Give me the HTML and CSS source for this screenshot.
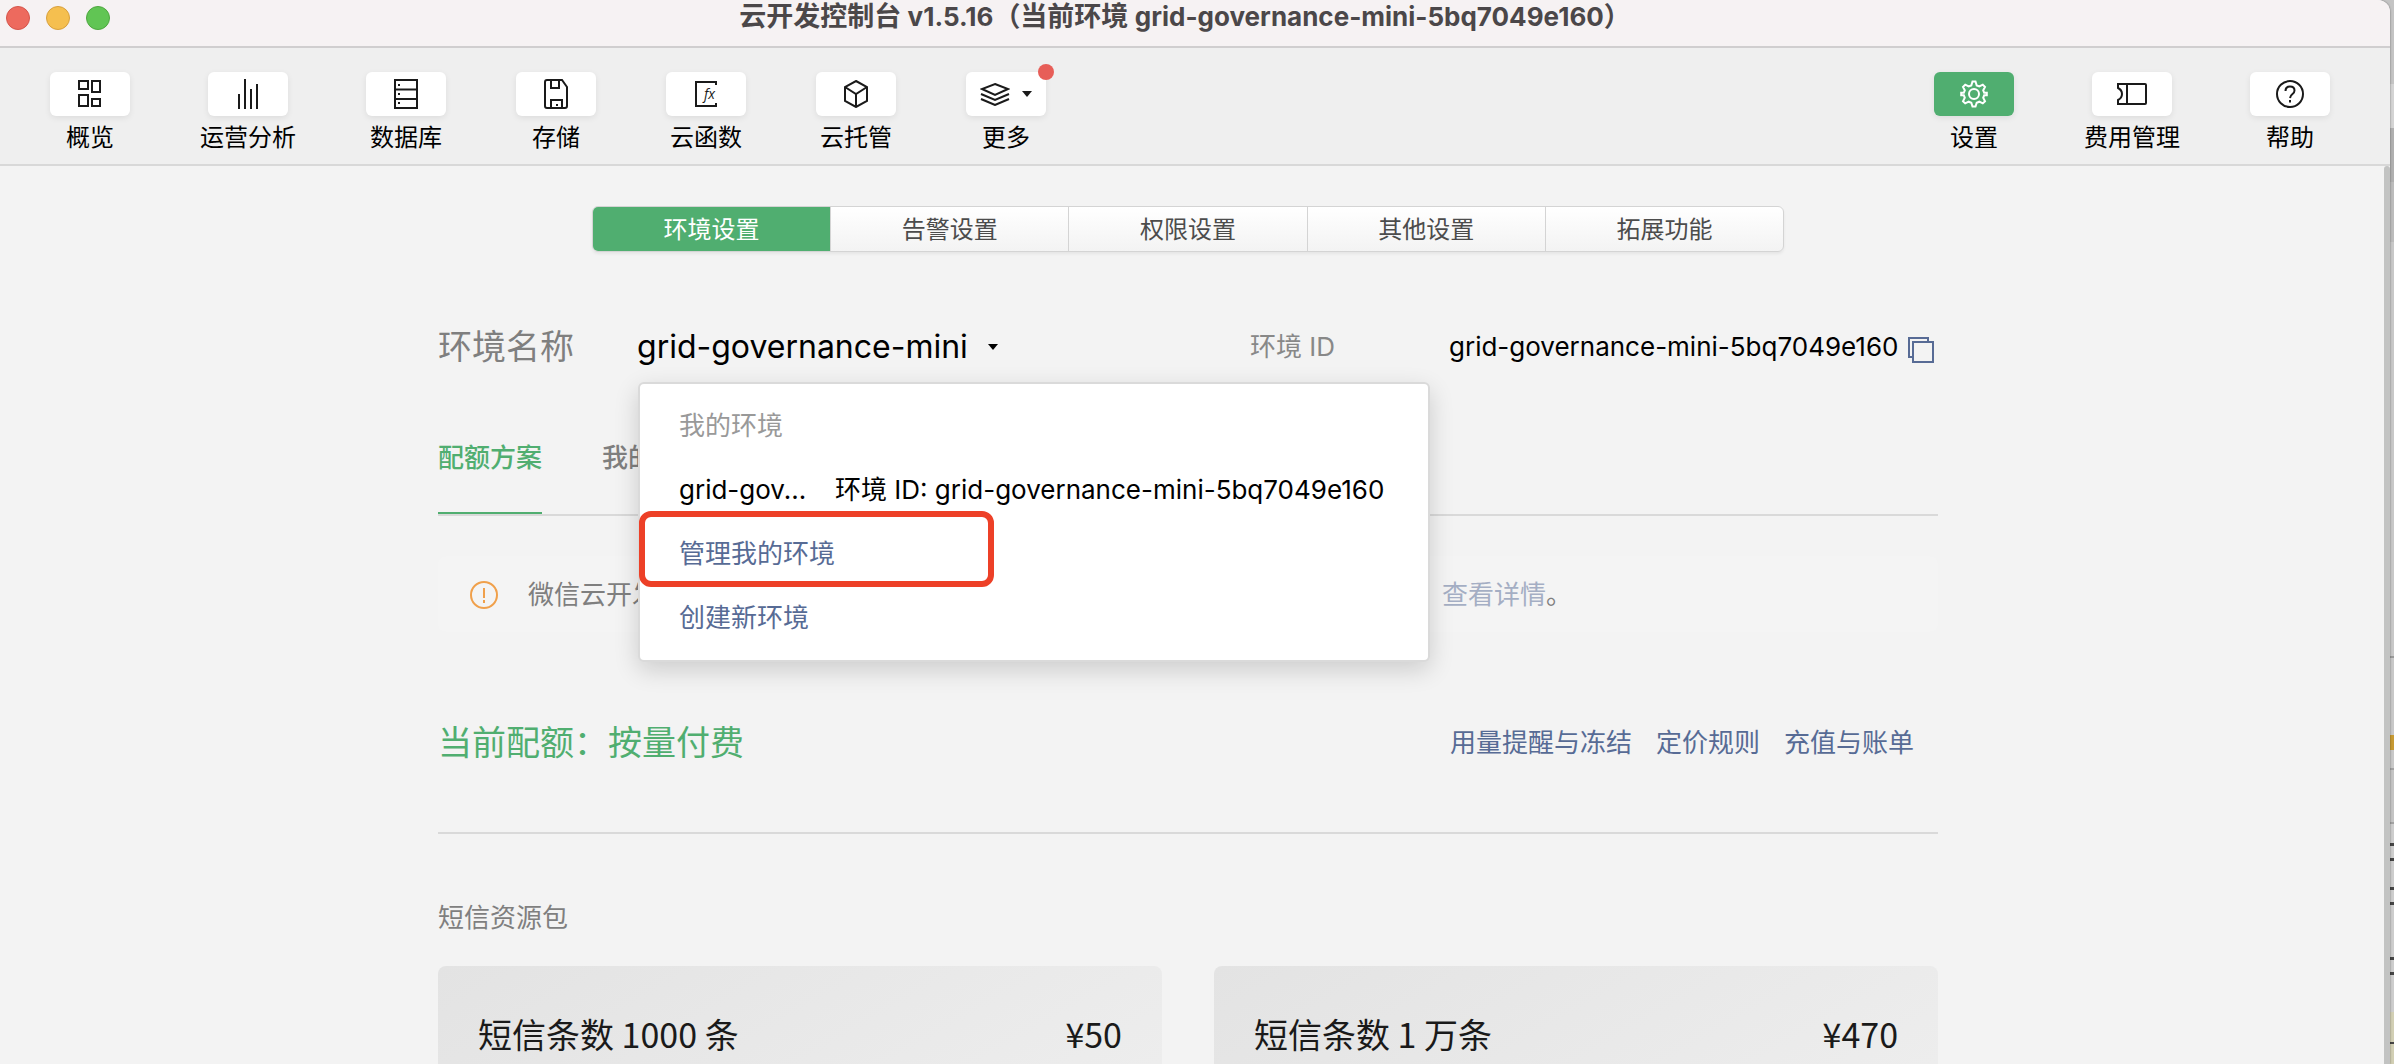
FILE: index.html
```html
<!DOCTYPE html>
<html lang="zh-CN">
<head>
<meta charset="utf-8">
<meta name="viewport" content="width=device-width, initial-scale=1">
<title>云开发控制台</title>
<link rel="stylesheet" href="styles.css">
</head>
<body>
<div class="window">
  <header class="titlebar">
    <div class="lights">
      <button class="light light-close" aria-label="关闭"></button>
      <button class="light light-min" aria-label="最小化"></button>
      <button class="light light-max" aria-label="最大化"></button>
    </div>
    <h1 class="title">云开发控制台 <span class="latin">v1.5.16</span>（当前环境 <span class="latin">grid-governance-mini-5bq7049e160</span>）</h1>
  </header>

  <nav class="toolbar" aria-label="主导航">
    <div class="tools">
      <button class="tool"><span class="tool-face">
        <svg width="24" height="30" viewBox="0 0 24 30"><path d="M1 2h9v8H1zM14 2h8v11h-8zM1 16h9v11H1zM14 20h8v7h-8z"/></svg>
      </span><span class="tool-label">概览</span></button>
      <button class="tool"><span class="tool-face">
        <svg width="22" height="30" viewBox="0 0 22 30"><path d="M2 15v15M8 0v30M14 10v20M20 5v25"/></svg>
      </span><span class="tool-label">运营分析</span></button>
      <button class="tool"><span class="tool-face">
        <svg width="24" height="30" viewBox="0 0 24 30"><path d="M1 1h22v28H1zM1 10.500h22M1 20h22"/><path d="M4 6h2M4 15h2M4 24h2"/></svg>
      </span><span class="tool-label">数据库</span></button>
      <button class="tool"><span class="tool-face">
        <svg width="24" height="30" viewBox="0 0 24 30"><path d="M1 3q0-2 2-2h15l5 7v19q0 2-2 2H3q-2 0-2-2zM7 1v8h8V1M7 29v-8h11v8M13 25v2"/></svg>
      </span><span class="tool-label">存储</span></button>
      <button class="tool"><span class="tool-face">
        <svg width="24" height="26" viewBox="0 0 24 26"><path d="M22 4V1H2v24h20v-3"/><text class="fx" x="10" y="18">fx</text></svg>
      </span><span class="tool-label">云函数</span></button>
      <button class="tool"><span class="tool-face">
        <svg width="26" height="28" viewBox="0 0 26 28"><path d="M13 1l11 6v14l-11 6L2 21V7zM2 7l11 7 11-7M13 14v13"/></svg>
      </span><span class="tool-label">云托管</span></button>
      <button class="tool tool-more"><span class="tool-face">
        <svg width="30" height="24" viewBox="0 0 30 24"><path d="M15 2l13 5-13 6L2 7zM1 12l14 6 14-6M1 17l14 6 14-6"/></svg>
        <svg class="solid" width="10" height="6" viewBox="0 0 10 6"><path d="M0 0h10L5 6z"/></svg>
        <span class="badge"></span>
      </span><span class="tool-label">更多</span></button>
    </div>
    <div class="tools">
      <button class="tool tool-active"><span class="tool-face">
        <svg width="28" height="28" viewBox="-14 -14 28 28"><circle r="5"/><path d="M-1.500-12.500h3l1.200 4 2.600 1 3.500-1.800 2.200 2.200L9.200-3.700l1 2.500 2.600 0v2.400l-2.600 0-1 2.600L11 7.300 8.800 9.400 5.300 7.700l-2.600 1-1.200 3.900h-3l-1.200-3.900-2.600-1-3.500 1.700L-11 7.300l1.800-3.500-1-2.600-2.600 0v-2.400l2.600 0 1-2.500L-11-7.100l2.200-2.200 3.500 1.800 2.600-1z"/></svg>
      </span><span class="tool-label">设置</span></button>
      <button class="tool"><span class="tool-face">
        <svg width="30" height="22" viewBox="0 0 30 22"><path d="M1 1h27q1 0 1 1v18q0 1-1 1H1v-4q4-2 4-6T1 5zM10 1v20"/></svg>
      </span><span class="tool-label">费用管理</span></button>
      <button class="tool"><span class="tool-face">
        <svg width="28" height="28" viewBox="0 0 28 28"><circle cx="14" cy="14" r="13"/><path d="M9.500 11q0-4.500 4.500-4.500t4.500 4q0 2-2 3.500T14 18M14 20v2.500"/></svg>
      </span><span class="tool-label">帮助</span></button>
    </div>
  </nav>

  <div class="viewport">
    <main class="content">
      <div class="segments" role="tablist">
        <button class="segment segment-on" role="tab">环境设置</button>
        <button class="segment" role="tab">告警设置</button>
        <button class="segment" role="tab">权限设置</button>
        <button class="segment" role="tab">其他设置</button>
        <button class="segment" role="tab">拓展功能</button>
      </div>

      <section class="env">
        <span class="env-label">环境名称</span>
        <div class="env-picker">
          <button class="env-name">grid-governance-mini
            <svg class="solid" width="10" height="6" viewBox="0 0 10 6"><path d="M0 0h10L5 6z"/></svg>
          </button>
          <div class="menu">
            <span class="menu-title">我的环境</span>
            <button class="menu-item menu-env"><span class="menu-name">grid-gov...</span><span>环境 ID: grid-governance-mini-5bq7049e160</span></button>
            <a class="menu-item menu-link" href="#manage">管理我的环境</a>
            <a class="menu-item menu-link" href="#create">创建新环境</a>
            <span class="marker"></span>
          </div>
        </div>
        <span class="env-id-label">环境 ID</span>
        <span class="env-id">grid-governance-mini-5bq7049e160</span>
        <button class="copy" aria-label="复制">
          <svg width="26" height="26" viewBox="0 0 26 26"><path d="M4 20H1V1h19v3M5 5h20v20H5z"/></svg>
        </button>
      </section>

      <div class="subtabs">
        <a class="subtab subtab-on" href="#quota">配额方案</a>
        <a class="subtab" href="#mine">我的</a>
      </div>

      <div class="notice">
        <svg width="28" height="28" viewBox="0 0 28 28"><circle cx="14" cy="14" r="13"/><path d="M14 7v10M14 19v3"/></svg>
        <p class="notice-text"><span class="notice-body">微信云开发</span><a class="notice-link" href="#detail">查看详情</a>。</p>
      </div>

      <section class="plan">
        <h2 class="plan-name">当前配额：按量付费</h2>
        <div class="plan-links">
          <a href="#freeze">用量提醒与冻结</a>
          <a href="#pricing">定价规则</a>
          <a href="#billing">充值与账单</a>
        </div>
      </section>

      <section class="packs">
        <h3 class="packs-title">短信资源包</h3>
        <div class="pack-grid">
          <article class="pack"><span>短信条数 1000 条</span><span>¥50</span></article>
          <article class="pack"><span>短信条数 1 万条</span><span>¥470</span></article>
        </div>
      </section>
    </main>
    <div class="scroll"></div>
  </div>
</div>
</body>
</html>
```
FILE: styles.css
```css
* { box-sizing: border-box; }

/* the body shows the desktop in a thin strip right of the window */
body {
  margin: 0;
  height: 100vh;
  overflow: hidden;
  padding-right: 4px;
  background: linear-gradient(
    #c4c4c4 84px, #d4d4d4 84px 128px, #b0b0b0 128px 182px, #bcbcbc 182px 242px,
    #c8c8c8 242px 656px, #9a9a9a 656px 658px, #c8c8c8 658px 735px,
    #c79a33 735px 750px, #c8c8c8 750px 768px, #a2a2a2 768px 770px,
    #c4c4c4 770px 822px, #a2a2a2 822px 824px, #cdcdcd 824px 843px,
    #444 843px 846px, #cdcdcd 846px 858px, #444 858px 861px,
    #cdcdcd 861px 887px, #444 887px 890px, #cdcdcd 890px 902px,
    #444 902px 905px, #cdcdcd 905px 957px, #444 957px 960px,
    #cdcdcd 960px 972px, #444 972px 975px, #cdcdcd 975px 1012px,
    #d2cfb4 1012px 1042px, #444 1042px 1044px, #d2cfb4 1044px);
  font-family: Inter, "Noto Sans CJK SC", sans-serif;
  font-size: 26px;
  line-height: 40px;
  color: #000;
}

button {
  margin: 0;
  padding: 0;
  border: 0;
  background: none;
  font: inherit;
  color: inherit;
}

a { color: #576b95; text-decoration: none; }

svg { fill: none; stroke: currentColor; stroke-width: 2; flex: none; }
.solid { fill: currentColor; stroke: none; }

.window {
  display: flex;
  flex-direction: column;
  height: 100%;
  overflow: hidden;
  border-top-right-radius: 12px;
  background: #f3f3f3;
  box-shadow: 0 0 2px rgba(0, 0, 0, .5);
}

/* title bar */
.titlebar {
  display: grid;
  grid-template-columns: 1fr auto 1fr;
  flex: none;
  height: 48px;
  background: #f6f2f3;
  border-bottom: 2px solid #d0cecf;
}
.lights { display: flex; gap: 16px; padding: 6px; }
.light { width: 24px; height: 24px; border-radius: 50%; border: 1px solid; }
.light-close { background: #ed6a5e; border-color: #d5554b; }
.light-min { background: #f5bf4f; border-color: #d8a03d; }
.light-max { background: #61c554; border-color: #4ea73f; }
.title {
  margin: 0;
  padding-right: 20px;
  font-size: 27px;
  font-weight: 700;
  line-height: 34px;
  color: #4b4749;
  white-space: nowrap;
}
.latin { font-size: 26px; }

/* toolbar */
.toolbar {
  display: flex;
  justify-content: space-between;
  flex: none;
  height: 118px;
  padding: 24px 60px 0 50px;
  background: #efefef;
  border-bottom: 2px solid #d8d8d8;
}
.tools { display: flex; align-items: flex-start; gap: 70px; }
.tool { display: flex; flex-direction: column; align-items: center; min-width: 80px; }
.tool-face {
  position: relative;
  display: flex;
  align-items: center;
  justify-content: center;
  gap: 12px;
  width: 80px;
  height: 44px;
  border-radius: 6px;
  background: #fff;
  box-shadow: 0 2px 6px rgba(0, 0, 0, .08);
  color: #1a1a1a;
}
.tool-label { font-size: 24px; line-height: 44px; }
.tool-active .tool-face { background: #50ae70; color: #fff; }
.badge {
  position: absolute;
  top: -8px;
  right: -8px;
  width: 16px;
  height: 16px;
  border-radius: 50%;
  background: #e75e58;
}
.fx { font: italic 14px "Open Sans", sans-serif; fill: currentColor; stroke: none; }

/* scrolling area */
.viewport { display: flex; flex: 1; min-height: 0; }
.content {
  width: 1500px;
  max-width: 100%;
  margin: 0 auto;
  padding-top: 40px;
}
.scroll { width: 6px; margin-left: 8px; border-radius: 3px 3px 0 0; background: #c2c3c2; }

.segments {
  display: flex;
  height: 46px;
  margin: 0 154px;
  border: 1px solid #d4d4d4;
  border-radius: 6px;
  overflow: hidden;
  background: linear-gradient(#fff, #f3f3f3);
  box-shadow: 0 2px 3px rgba(0, 0, 0, .06);
}
.segment { flex: 1; padding-top: 2px; font-size: 24px; line-height: 42px; color: #4c4c4c; }
.segment + .segment { border-left: 1px solid #d4d4d4; }
.segment-on { background: #50ae70; color: #fff; }

/* environment row */
.env { display: flex; align-items: center; margin-top: 68px; height: 54px; }
.env-label { width: 199px; font-size: 34px; color: #7f7f7f; }
.env-picker { position: relative; width: 613px; }
.env-name { display: flex; align-items: center; gap: 20px; font-size: 32px; }
.env-id-label { width: 199px; color: #888; }
.env-id { margin-right: auto; }
.copy { display: flex; margin: 6px 4px 0 0; color: #576b95; }

.menu {
  position: absolute;
  z-index: 1;
  top: 55px;
  left: 1px;
  width: 792px;
  padding: 10px 0;
  display: flex;
  flex-direction: column;
  border: 2px solid #dadada;
  border-radius: 6px;
  background: #fff;
  box-shadow: 0 8px 24px rgba(0, 0, 0, .16);
  white-space: nowrap;
}
.menu-title, .menu-item { display: block; padding: 0 39px; line-height: 64px; text-align: left; }
.menu-title { color: #999; }
.menu-env { display: flex; }
.menu-name { width: 156px; }
.marker {
  position: absolute;
  left: -1px;
  top: 127px;
  width: 355px;
  height: 76px;
  border: 6px solid #ed4027;
  border-radius: 12px;
}

.subtabs { display: flex; gap: 60px; margin-top: 64px; border-bottom: 2px solid #d9d9d9; }
.subtab { height: 76px; font-weight: 500; color: #7f7f7f; border-bottom: 2px solid transparent; }
.subtab-on { color: #50ae70; border-color: #50ae70; }

.notice {
  display: flex;
  align-items: center;
  gap: 30px;
  height: 76px;
  margin-top: 40px;
  padding: 2px 0 0 32px;
  border-radius: 8px;
  background: #f4f4f4;
  color: #f0a04b;
}
.notice-text { display: flex; margin: 0; color: #7f7f7f; white-space: nowrap; }
.notice-body { width: 914px; }
.notice-link { opacity: .5; }

.plan {
  display: flex;
  align-items: center;
  justify-content: space-between;
  height: 202px;
  padding: 22px 24px 0 0;
  border-bottom: 2px solid #d9d9d9;
}
.plan-name { margin: 0; font-size: 34px; font-weight: 400; color: #50ae70; }
.plan-links { display: flex; gap: 24px; }

.packs-title { margin: 64px 0 28px; font-size: 26px; font-weight: 400; color: #7f7f7f; }
.pack-grid { display: grid; grid-template-columns: 1fr 1fr; gap: 52px; }
.pack {
  display: flex;
  justify-content: space-between;
  height: 200px;
  padding: 48px 40px;
  border-radius: 8px;
  background: linear-gradient(150deg, #e3e3e3, #efefef);
  font-family: "Noto Sans CJK SC", sans-serif;
  font-size: 34px;
  color: #1a1a1a;
}
```
